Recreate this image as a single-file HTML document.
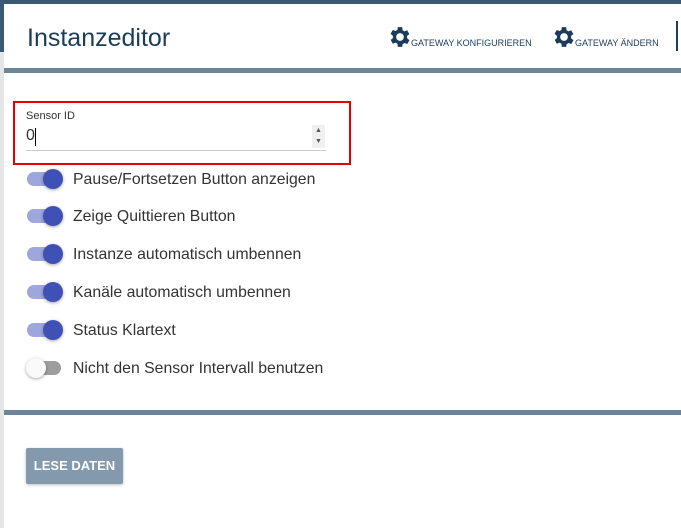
<!DOCTYPE html>
<html><head><style>
body{margin:0;width:681px;height:528px;overflow:hidden;background:#e6e6e6;font-family:"Liberation Sans",sans-serif;position:relative}
.top{position:absolute;left:0;top:0;width:681px;height:4px;background:#3b5874}
.lstrip{position:absolute;left:0;top:0;width:4px;height:52px;background:#3b5874}
.panel{position:absolute;left:4px;top:4px;right:0;bottom:0;background:#fff}
h1{position:absolute;left:27px;top:24px;margin:0;font-size:25px;font-weight:normal;color:#1d3b5a;letter-spacing:0px}
.act{position:absolute;top:26px;font-size:9px;color:#1d3b5a;display:flex;align-items:flex-end}
.act svg{margin-right:0px}
.vline{position:absolute;left:676px;top:21px;width:2px;height:30px;background:#1d3b5a}
.sep{position:absolute;left:4px;right:0;height:5px;background:#6d8499}
.box{position:absolute;left:13px;top:101px;width:334px;height:60px;border:2px solid #e60000}
.lbl{position:absolute;left:26px;top:110px;font-size:11px;color:#333}
.val{position:absolute;left:26px;top:127px;font-size:16px;color:#333}
.cursor{position:absolute;left:35px;top:128px;width:1px;height:18px;background:#000}
.ul{position:absolute;left:26px;top:150px;width:300px;height:1px;background:#ccc}
.spin{position:absolute;left:312px;top:125px;width:13px;height:23px;background:#f0f0f0;font-size:7px;color:#555;text-align:center;line-height:11px}
.tg{position:absolute;left:27px;width:36px;height:14px}
.tr{position:absolute;left:0;top:0;width:34px;height:14px;border-radius:7px;background:#9ea7dc}
.kn{position:absolute;top:-3px;left:16px;width:20px;height:20px;border-radius:50%;background:#3f51b5;box-shadow:0 1px 3px rgba(0,0,0,.35)}
.off .tr{background:#9e9e9e}
.off .kn{left:-1px;background:#fafafa}
.tl{position:absolute;left:73px;font-size:15.8px;color:#333}
.btn{position:absolute;left:26px;top:448px;width:97px;height:36px;background:#8299ae;color:#fff;font-size:13px;font-weight:bold;text-align:center;line-height:36px;border-radius:2px;box-shadow:0 1px 3px rgba(0,0,0,.25)}
</style></head><body>
<div class="top"></div><div class="lstrip"></div>
<div class="panel"></div>
<h1>Instanzeditor</h1>
<div class="act" style="left:389px"><svg width="22" height="22" viewBox="3 2 20 20"><path fill="#1d3b5a" d="M19.4 13a7.5 7.5 0 0 0 0-2l2.1-1.6-2-3.5-2.5 1a7 7 0 0 0-1.7-1L15 3h-4l-.4 2.6a7 7 0 0 0-1.7 1l-2.5-1-2 3.5L6.6 11a7.5 7.5 0 0 0 0 2l-2.1 1.6 2 3.5 2.5-1a7 7 0 0 0 1.7 1L11 21h4l.4-2.6a7 7 0 0 0 1.7-1l2.5 1 2-3.5zM13 15.5a3.5 3.5 0 1 1 0-7 3.5 3.5 0 0 1 0 7z"/></svg><span>GATEWAY KONFIGURIEREN</span></div>
<div class="act" style="left:553px"><svg width="22" height="22" viewBox="3 2 20 20"><path fill="#1d3b5a" d="M19.4 13a7.5 7.5 0 0 0 0-2l2.1-1.6-2-3.5-2.5 1a7 7 0 0 0-1.7-1L15 3h-4l-.4 2.6a7 7 0 0 0-1.7 1l-2.5-1-2 3.5L6.6 11a7.5 7.5 0 0 0 0 2l-2.1 1.6 2 3.5 2.5-1a7 7 0 0 0 1.7 1L11 21h4l.4-2.6a7 7 0 0 0 1.7-1l2.5 1 2-3.5zM13 15.5a3.5 3.5 0 1 1 0-7 3.5 3.5 0 0 1 0 7z"/></svg><span>GATEWAY ÄNDERN</span></div>
<div class="vline"></div>
<div class="sep" style="top:68px"></div>
<div class="box"></div>
<div class="lbl">Sensor ID</div>
<div class="val">0</div><div class="cursor"></div>
<div class="spin">▲<br>▼</div>
<div class="ul"></div>

<div class="tg" style="top:172px"><div class="tr"></div><div class="kn"></div></div><div class="tl" style="top:171px">Pause/Fortsetzen Button anzeigen</div>
<div class="tg" style="top:209px"><div class="tr"></div><div class="kn"></div></div><div class="tl" style="top:208px">Zeige Quittieren Button</div>
<div class="tg" style="top:247px"><div class="tr"></div><div class="kn"></div></div><div class="tl" style="top:246px">Instanze automatisch umbennen</div>
<div class="tg" style="top:285px"><div class="tr"></div><div class="kn"></div></div><div class="tl" style="top:284px">Kanäle automatisch umbennen</div>
<div class="tg" style="top:323px"><div class="tr"></div><div class="kn"></div></div><div class="tl" style="top:322px">Status Klartext</div>
<div class="tg off" style="top:361px"><div class="tr"></div><div class="kn"></div></div><div class="tl" style="top:360px">Nicht den Sensor Intervall benutzen</div>

<div class="sep" style="top:410px"></div>
<div class="btn">LESE DATEN</div>
</body></html>
